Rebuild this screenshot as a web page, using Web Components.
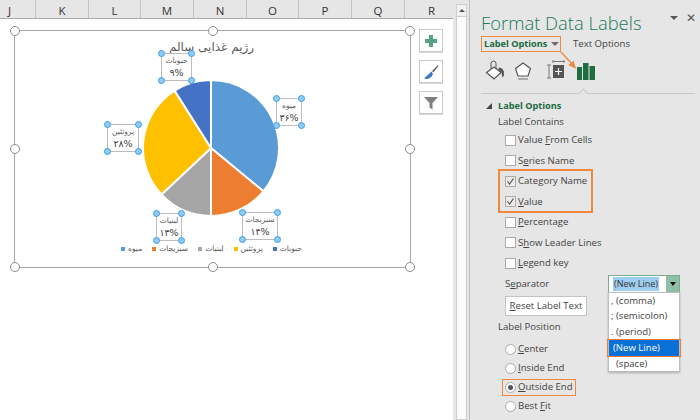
<!DOCTYPE html>
<html lang="en">
<head>
<meta charset="utf-8">
<title>Format Data Labels</title>
<style>
  html, body { margin: 0; height: 100%; }
  body { width: 700px; height: 420px; overflow: hidden; background: #fff; display: flex; font-family: "Open Sans", "DejaVu Sans", sans-serif; }
</style>
</head>
<body>
<x-sheet>
  <x-chart></x-chart>
</x-sheet>
<x-scrollbar></x-scrollbar>
<x-panel>
  <x-check>Value <u>F</u>rom Cells</x-check>
  <x-check>S<u>e</u>ries Name</x-check>
  <x-check checked>Cate<u>g</u>ory Name</x-check>
  <x-check checked><u>V</u>alue</x-check>
  <x-check><u>P</u>ercentage</x-check>
  <x-check>S<u>h</u>ow Leader Lines</x-check>
  <x-check><u>L</u>egend key</x-check>
</x-panel>

<script>
const ARABIC = `"DejaVu Sans", sans-serif`;

// ستون‌های شیت
class XSheet extends HTMLElement {
  constructor() {
    super();
    const cols = [["J", 36, "0 16px 0 0"], ["K", 53], ["L", 52], ["M", 53], ["N", 53], ["O", 52], ["P", 53], ["Q", 53], ["R", 48, "0 0 0 5px"]];
    const cells = cols.map(([n, w, p]) => `<div class="c" style="width:${w}px;${p ? `padding:${p}` : ""}">${n}</div>`).join("");
    this.attachShadow({ mode: "open" }).innerHTML = `
      <style>
        :host { display: flex; flex-direction: column; width: 453px; height: 420px; background: #fff; flex: none; }
        .head { display: flex; height: 18px; background: #e6e6e6; border-bottom: 1px solid #ababab; box-sizing: content-box; }
        .c { box-sizing: border-box; height: 18px; text-align: center; font: 11.5px/21px "Open Sans", sans-serif; color: #333; border-right: 1px solid #c4c4c4; }
        .c:last-child { border-right: 0; }
        .body { display: flex; gap: 8px; padding: 11px 0 0 14px; align-items: flex-start; }
        .btns { display: flex; flex-direction: column; gap: 8px; margin-top: -1px; }
      </style>
      <div class="head">${cells}</div>
      <div class="body">
        <slot></slot>
        <div class="btns">
          <x-chart-btn><svg width="14" height="14" viewBox="0 0 14 14"><path d="M5 1h4v4h4v4H9v4H5V9H1V5h4z" fill="#56a383"/></svg></x-chart-btn>
          <x-chart-btn><svg width="16" height="16" viewBox="0 0 16 16"><path d="M15 1 9 7l1.500 1.500L15.500 2z" fill="#6b6b6b"/><path d="M8.500 7.500 1 14.500c3 1 7 .5 9-4.500z" fill="#3f79c1"/></svg></x-chart-btn>
          <x-chart-btn><svg width="16" height="14" viewBox="0 0 16 14"><path d="M1 1h14L9.500 7v6.500L6.500 11.500V7z" fill="#7f7f7f"/></svg></x-chart-btn>
        </div>
      </div>`;
  }
}

class XChartBtn extends HTMLElement {
  constructor() {
    super();
    this.attachShadow({ mode: "open" }).innerHTML = `
      <style>
        :host { display: flex; align-items: center; justify-content: center; box-sizing: border-box; width: 24px; height: 23px; background: #fff; border: 1px solid #c9c9c9; box-shadow: 0 1px 0 #d8d8d8; }
      </style>
      <slot></slot>`;
  }
}

// برچسب داده با دستگیره‌های گوشه
class XLabel extends HTMLElement {
  constructor() {
    super();
    this.attachShadow({ mode: "open" }).innerHTML = `
      <style>
        :host { position: absolute; box-sizing: border-box; display: flex; flex-direction: column; align-items: center; justify-content: center; border: 1px solid #bdbdbd; background: #fff; font: 7.500px/12px ${ARABIC}; color: #595959; direction: rtl; white-space: nowrap; }
        .v { font-size: 9.500px; color: #404040; }
        i { position: absolute; width: 5px; height: 5px; border-radius: 50%; background: #8fcbf5; border: 1px solid #3f9de6; }
        .a { left: -4px; top: -4px; } .b { right: -4px; top: -4px; }
        .d { left: -4px; bottom: -4px; } .e { right: -4px; bottom: -4px; }
      </style>
      <slot></slot>
      <span class="v"><slot name="v"></slot></span>
      <i class="a"></i><i class="b"></i><i class="d"></i><i class="e"></i>`;
  }
  connectedCallback() {
    const [x, y, w, h] = this.getAttribute("box").split(",");
    Object.assign(this.style, { left: x + "px", top: y + "px", width: w + "px", height: h + "px" });
  }
}

function slicePath(cx, cy, r, from, to) {
  const pt = (d) => {
    const a = (d - 90) * Math.PI / 180;
    return `${(cx + r * Math.cos(a)).toFixed(2)} ${(cy + r * Math.sin(a)).toFixed(2)}`;
  };
  return `M${cx} ${cy}L${pt(from)}A${r} ${r} 0 ${to - from > 180 ? 1 : 0} 1 ${pt(to)}Z`;
}

class XChart extends HTMLElement {
  constructor() {
    super();
    const data = [
      ["میوه", 36, "#5b9bd5"], ["سبزیجات", 14, "#ed7d31"], ["لبنیات", 13, "#a5a5a5"],
      ["پروتئین", 28, "#ffc000"], ["حبوبات", 9, "#4472c4"]
    ];
    let at = 0;
    const slices = data.map(([, v, col]) => {
      const p = slicePath(70, 70, 68, at, at + v * 3.6);
      at += v * 3.6;
      return `<path d="${p}" fill="${col}" stroke="#fff" stroke-width="2"/>`;
    }).join("");
    const legend = data.map(([n, , col]) => `<span class="k"><b style="background:${col}"></b>${n}</span>`).join("");
    const grips = [
      "left:-5px;top:-5px", "left:50%;margin-left:-5px;top:-5px", "right:-5px;top:-5px",
      "left:-5px;top:50%;margin-top:-5px", "right:-5px;top:50%;margin-top:-5px",
      "left:-5px;bottom:-5px", "left:50%;margin-left:-5px;bottom:-5px", "right:-5px;bottom:-5px"
    ].map((s) => `<i style="${s}"></i>`).join("");
    this.attachShadow({ mode: "open" }).innerHTML = `
      <style>
        :host { display: flex; flex-direction: column; align-items: center; position: relative; box-sizing: border-box; width: 397px; height: 238px; border: 1.5px solid #a6a6a6; flex: none; }
        .title { height: 47px; box-sizing: border-box; padding-top: 6px; margin-right: 2px; font: 12px/20px ${ARABIC}; color: #595959; direction: rtl; white-space: nowrap; }
        svg { display: block; flex: none; margin-right: 3px; }
        .legend { display: flex; gap: 10px; margin-top: 25px; margin-right: 2px; font: 7.500px/12px ${ARABIC}; color: #595959; white-space: nowrap; }
        .k { display: flex; align-items: center; gap: 3px; }
        .k b { width: 4px; height: 4px; display: block; }
        i { position: absolute; box-sizing: border-box; width: 10px; height: 10px; border-radius: 50%; background: #fff; border: 1.5px solid #8c8c8c; }
      </style>
      <div class="title">رژیم غذایی سالم</div>
      <svg width="140" height="140" viewBox="0 0 140 140">${slices}</svg>
      <div class="legend">${legend}</div>
      <x-label box="146,22,31,28">حبوبات<span slot="v">۹%</span></x-label>
      <x-label box="92,93,32,28">پروتئین<span slot="v">۲۸%</span></x-label>
      <x-label box="261,67,26,28">میوه<span slot="v">۳۶%</span></x-label>
      <x-label box="141,182,26,28">لبنیات<span slot="v">۱۳%</span></x-label>
      <x-label box="227,181,36,28">سبزیجات<span slot="v">۱۴%</span></x-label>
      ${grips}`;
  }
}

class XScrollbar extends HTMLElement {
  constructor() {
    super();
    this.attachShadow({ mode: "open" }).innerHTML = `
      <style>
        :host { display: flex; flex-direction: column; box-sizing: border-box; width: 17px; height: 420px; flex: none; background: #e6e6e6; padding: 4px 2px 0 3px; border-right: 1px solid #bfbfbf; }
        .up { height: 13px; background: #f1f1f1; border: 1px solid #cfcfcf; box-sizing: border-box; display: flex; align-items: center; justify-content: center; }
        .up::before { content: ""; border: 3px solid transparent; border-top: 0; border-bottom: 3px solid #555; }
        .track { flex: 1; background: #fbfbfb; border: 1px solid #cfcfcf; border-top: 0; }
      </style>
      <div class="up"></div><div class="track"></div>`;
  }
}

class XCheck extends HTMLElement {
  constructor() {
    super();
    this.attachShadow({ mode: "open" }).innerHTML = `
      <style>
        :host { display: flex; align-items: center; gap: 2px; height: 20.500px; padding-left: 24px; color: #444; font: 9.600px/14px "Open Sans", sans-serif; white-space: nowrap; }
        .box { box-sizing: border-box; width: 11px; height: 11px; border: 1px solid #ababab; background: #fff; display: flex; }
        :host([checked]) .box { background: #ececec; }
        svg { display: none; }
        :host([checked]) svg { display: block; }
      </style>
      <span class="box"><svg width="9" height="9" viewBox="0 0 9 9"><path d="M1.500 4.500 3.500 7 7.500 1.500" fill="none" stroke="#555" stroke-width="1.200"/></svg></span>
      <span><slot></slot></span>`;
  }
}

class XRadio extends HTMLElement {
  constructor() {
    super();
    this.attachShadow({ mode: "open" }).innerHTML = `
      <style>
        :host { display: flex; align-items: center; gap: 2px; height: 19px; padding-left: 24px; color: #444; font: 9.600px/14px "Open Sans", sans-serif; white-space: nowrap; }
        .o { box-sizing: border-box; width: 11px; height: 11px; border-radius: 50%; border: 1px solid #ababab; background: #fff; display: flex; align-items: center; justify-content: center; }
        :host([checked]) .o::before { content: ""; width: 5px; height: 5px; border-radius: 50%; background: #555; }
      </style>
      <span class="o"></span><span><slot></slot></span>`;
  }
}

class XDropdown extends HTMLElement {
  constructor() {
    super();
    this.attachShadow({ mode: "open" }).innerHTML = `
      <style>
        :host { display: block; position: relative; box-sizing: border-box; width: 72px; height: 18px; background: #fff; border: 1px solid #79ad93; font: 9px/14px "Open Sans", sans-serif; color: #444; }
        .f { display: flex; height: 16px; justify-content: space-between; }
        .sel { margin: 1px 0 1px 4px; padding: 0 1px; background: #9fcdf0; color: #333; white-space: nowrap; }
        .arr { width: 13px; background: #8fc0a7; display: flex; align-items: center; justify-content: center; }
        .arr::before { content: ""; border: 3.500px solid transparent; border-bottom: 0; border-top: 4px solid #111; }
        .list { position: absolute; left: -1px; top: 16px; box-sizing: border-box; width: 72px; background: #fff; border: 1px solid #bdbdbd; box-shadow: 0 1px 2px #aaa; display: flex; flex-direction: column; }
        .list div { height: 15.800px; line-height: 16px; padding-left: 2px; white-space: nowrap; font-size: 9.600px; }
        .on { position: relative; background: #0a6fd6; color: #fff; padding-left: 4px !important; }
        .on::after { content: ""; position: absolute; inset: -1px -2px -1px -2px; border: 1px solid #ed7d31; }
      </style>
      <div class="f"><span class="sel">(New Line)</span><span class="arr"></span></div>
      <div class="list">
        <div>, (comma)</div><div>; (semicolon)</div><div>. (period)</div>
        <div class="on">(New Line)</div><div>&nbsp;&nbsp;(space)</div>
      </div>`;
  }
}

class XPanel extends HTMLElement {
  constructor() {
    super();
    this.attachShadow({ mode: "open" }).innerHTML = `
      <style>
        :host { display: block; position: relative; box-sizing: border-box; width: 230px; height: 420px; flex: none; background: #e6e6e6; padding: 9px 4px 0 11px; color: #444; font: 9.600px/14px "Open Sans", sans-serif; overflow: hidden; }
        .top { display: flex; justify-content: space-between; align-items: center; height: 28px; }
        h1 { margin: 0; font: 300 18.400px/28px "Open Sans", sans-serif; color: #217a5b; white-space: nowrap; }
        .ctl { display: flex; gap: 8px; align-items: center; margin: -10px 0 0 0; }
        .ctl b { display: block; border: 4px solid transparent; border-bottom: 0; border-top: 4px solid #555; }
        .ctl span { font: 12px/14px "DejaVu Sans", sans-serif; color: #555; }
        .tabs { display: flex; align-items: center; gap: 12px; margin-top: -1px; height: 16px; }
        .tab1 { box-sizing: border-box; display: flex; align-items: center; justify-content: space-between; height: 16px; width: 80px; padding: 0 1px 0 2px; border: 1px solid #f0883e; font-size: 9.200px; font-weight: 700; color: #1c6b41; white-space: nowrap; }
        .tab1 b { display: block; border: 4px solid transparent; border-bottom: 0; border-top: 4px solid #6d6d6d; }
        .icons { display: flex; gap: 12px; height: 21px; margin: 7px 0 0 4px; align-items: flex-end; }
        .rule { position: relative; height: 0; border-top: 1px solid #c8c8c8; margin-top: 13px; margin-right: 1px; }
        .rule::before { content: ""; position: absolute; left: 99px; top: -4px; width: 6px; height: 6px; background: #e6e6e6; border-left: 1px solid #c8c8c8; border-top: 1px solid #c8c8c8; transform: rotate(45deg); }
        .sec { display: flex; align-items: center; gap: 6px; margin: 5px 0 0 5px; height: 14px; font-size: 9.200px; font-weight: 700; color: #1c6b41; }
        .sec b { display: block; width: 0; height: 0; border-left: 6px solid transparent; border-bottom: 6px solid #444; }
        .cap { padding-left: 17px; margin-top: 2px; height: 14px; white-space: nowrap; }
        .list { margin-top: 1px; position: relative; }
        .hl { position: absolute; box-sizing: border-box; left: 17px; top: 39px; width: 95px; height: 44px; border: 2px solid #f0883e; }
        .sep { box-sizing: border-box; display: flex; justify-content: space-between; align-items: center; padding-left: 24px; height: 20px; width: 199px; }
        .reset { box-sizing: border-box; display: flex; align-items: center; justify-content: center; width: 82px; height: 20px; margin: 2px 0 0 24px; background: #fff; border: 1px solid #c4c4c4; white-space: nowrap; }
        .radios { margin-top: 6px; position: relative; }
        .hl2 { position: absolute; box-sizing: border-box; left: 21px; top: 39.500px; width: 74px; height: 17px; border: 1px solid #f0883e; }
        .arrow { position: absolute; left: 0; top: 0; pointer-events: none; }
      </style>
      <div class="top">
        <h1>Format Data Labels</h1>
        <div class="ctl"><b></b><span>✕</span></div>
      </div>
      <div class="tabs">
        <div class="tab1">Label Options<b></b></div>
        <div>Text Options</div>
      </div>
      <div class="icons">
        <svg width="20" height="20" viewBox="0 0 20 20" style="margin-right:-3px"><path d="M9 7 1.500 12.500 9 19l7-6.500z" fill="#fff" stroke="#555" stroke-width="1.200"/><path d="M6 9V3.500a2.500 2.500 0 0 1 5 0V9" fill="none" stroke="#555"/><path d="M14.500 7.500c3 .5 4.500 3 4.500 6 0 1-.3 3.500-1 3.500-1.500 0-1-3-1.500-4.500L13 9z" fill="#555"/></svg>
        <svg width="18" height="19" viewBox="0 0 18 19" style="margin-right:2px"><path d="M9 2 16.500 7.500 14 15H4L1.500 7.500z" fill="#fff" stroke="#555" stroke-width="1.200"/><path d="M4 18h10" stroke="#999" stroke-width="1.500"/></svg>
        <svg width="19" height="21" viewBox="0 0 19 21"><rect x="7" y="6" width="11" height="13" fill="#555"/><path d="M12.500 9v7M9 12.500h7" stroke="#fff" stroke-width="1.200"/><path d="M1 6h4M3 6v13M1 19h4M7 2.500h11M7 1v3M18 1v3" stroke="#777" fill="none"/></svg>
        <svg width="18" height="18" viewBox="0 0 18 18"><path d="M0 5h5v13H0zM6 1h5.500v17H6zM12.500 4H18v14h-5.500z" fill="#1e6e42"/></svg>
      </div>
      <div class="rule"></div>
      <div class="sec"><b></b>Label Options</div>
      <div class="cap">Label Contains</div>
      <div class="list"><slot></slot><div class="hl"></div></div>
      <div class="sep"><span>S<u>e</u>parator</span><x-dropdown></x-dropdown></div>
      <div class="reset"><span><u>R</u>eset Label Text</span></div>
      <div class="cap" style="margin-top:4px">Label Position</div>
      <div class="radios">
        <x-radio><u>C</u>enter</x-radio>
        <x-radio><u>I</u>nside End</x-radio>
        <x-radio checked><u>O</u>utside End</x-radio>
        <x-radio>Best <u>F</u>it</x-radio>
        <div class="hl2"></div>
      </div>
      <svg class="arrow" width="230" height="90" viewBox="0 0 230 90"><path d="M91 52 103 65" stroke="#f0883e" stroke-width="1.300" fill="none"/><path d="M106 69 98.500 65 103.500 60.500z" fill="#f0883e"/></svg>`;
  }
}

customElements.define("x-chart-btn", XChartBtn);
customElements.define("x-label", XLabel);
customElements.define("x-chart", XChart);
customElements.define("x-sheet", XSheet);
customElements.define("x-scrollbar", XScrollbar);
customElements.define("x-check", XCheck);
customElements.define("x-radio", XRadio);
customElements.define("x-dropdown", XDropdown);
customElements.define("x-panel", XPanel);
</script>
</body>
</html>
